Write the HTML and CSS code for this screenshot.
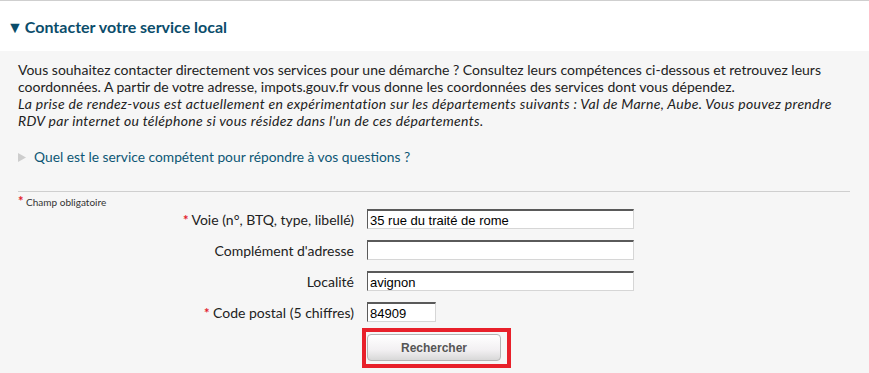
FILE: index.html
```html
<!DOCTYPE html>
<html lang="fr">
<head>
  <meta charset="UTF-8">
  <title>Contacter votre service local</title>
  <meta name="viewport" content="width=device-width, initial-scale=1.0">
  <link rel="stylesheet" href="styles.css">
</head>
<body>

  <header class="panel-head">
    <h2><span class="arrow">&#9660;</span>Contacter votre service local</h2>
  </header>

  <main class="panel-body">

    <!-- Intro -->
    <p class="intro">
      Vous souhaitez contacter directement vos services pour une démarche ? Consultez leurs compétences ci-dessous et retrouvez leurs coordonnées. A partir de votre adresse, impots.gouv.fr vous donne les coordonnées des services dont vous dépendez.<br>
      <em>La prise de rendez-vous est actuellement en expérimentation sur les départements suivants : Val de Marne, Aube. Vous pouvez prendre RDV par internet ou téléphone si vous résidez dans l'un de ces départements.</em>
    </p>

    <p class="toggle">
      <svg class="toggle-arrow" width="8" height="9" viewBox="0 0 8 9"><polygon points="0,0 8,4.5 0,9" fill="#cdcdcd"/></svg><a href="#">Quel est le service compétent pour répondre à vos questions ?</a>
    </p>

    <hr class="sep">

    <p class="required-note"><span class="star">*</span> Champ obligatoire</p>

    <!-- Search form -->
    <form class="search-form">
      <label for="voie"><span class="star">*</span> Voie (n°, BTQ, type, libellé)</label>
      <input id="voie" type="text" value="35 rue du traité de rome">

      <label for="complement">Complément d'adresse</label>
      <input id="complement" type="text" value="">

      <label for="localite">Localité</label>
      <input id="localite" type="text" value="avignon">

      <label for="cp"><span class="star">*</span> Code postal (5 chiffres)</label>
      <input id="cp" class="short" type="text" value="84909">

      <div class="btn-row">
        <div class="highlight">
          <button type="button" class="btn">Rechercher</button>
        </div>
      </div>
    </form>

  </main>

</body>
</html>
```

FILE: styles.css
```css
/* Base */
body {
  margin: 0;
  font-family: Lato, "Open Sans", sans-serif;
  font-size: 14px;
  color: #222;
  background-color: #f6f6f6;
}

/* Header */
.panel-head {
  background: white;
  border-top: 1px solid #cfcfcf;
  height: 50px;
  padding-left: 7px;
}

.panel-head h2 {
  margin: 0;
  padding-top: 15px;
  font-size: 16px;
  line-height: 22px;
  font-weight: bold;
  color: #0b4d6b;
}

.panel-head .arrow {
  font-size: 16px;
  margin-right: 2px;
}

/* Body */
.panel-body {
  padding: 10px 18px 0 18px;
}

.intro {
  margin: 0;
  line-height: 17px;
  width: 830px;
}

.intro em {
  font-style: italic;
  letter-spacing: 0.3px;
}

.toggle {
  margin: 18px 0 0 0;
  line-height: 20px;
}

.toggle-arrow {
  margin-right: 8px;
}

.toggle a {
  color: #0d5675;
  text-decoration: none;
  font-size: 13.8px;
}

.sep {
  margin: 24px 0 0 0;
  width: 832px;
  border: none;
  border-top: 1px solid #cfcfcf;
}

.required-note {
  margin: 3px 0 0 0;
  font-size: 10px;
  line-height: 12px;
  color: #333;
}

.star {
  color: #e2202a;
  font-weight: bold;
  font-size: 13px;
}

/* Form */
.search-form {
  display: grid;
  grid-template-columns: 336px 267px;
  column-gap: 13px;
  row-gap: 11px;
  margin-top: 1px;
  align-items: center;
}

.search-form label {
  text-align: right;
  font-size: 14px;
  color: #222;
}

.search-form input {
  box-sizing: border-box;
  height: 20px;
  width: 267px;
  margin: 0;
  padding: 1px 2px 0 2px;
  font-family: Arial, "Liberation Sans", sans-serif;
  font-size: 13px;
  color: #000;
  background: white;
  border-top: 2px solid #5a5a5a;
  border-left: 1px solid #5a5a5a;
  border-right: 1px solid #d6d6d6;
  border-bottom: 1px solid #d6d6d6;
}

.search-form input.short {
  width: 69px;
}

.btn-row {
  grid-column: 2;
  margin-left: -5px;
  margin-top: -5px;
}

.highlight {
  display: inline-block;
  border: 4px solid #e8202a;
  padding: 2px 6px 3px 1px;
}

.btn {
  display: block;
  width: 134px;
  height: 27px;
  border: 1px solid #b5b5b5;
  border-radius: 4px;
  background: linear-gradient(#ffffff, #f2f0f2 60%, #d8d8d8);
  font-family: Arial, "Liberation Sans", sans-serif;
  font-size: 12px;
  font-weight: bold;
  color: #555;
  cursor: pointer;
}
```
